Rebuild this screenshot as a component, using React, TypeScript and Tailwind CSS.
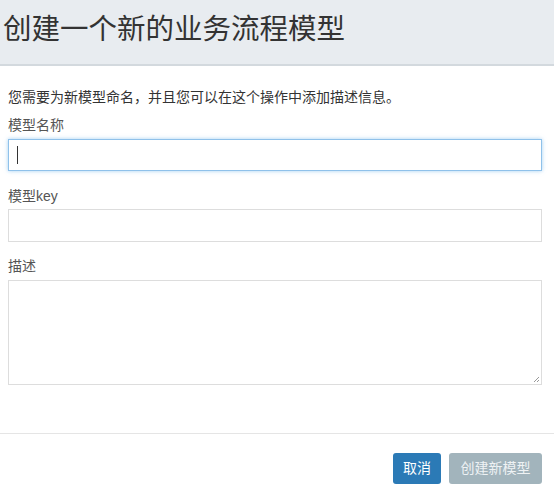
import React from "react";

const App = () => {
  return (
    <div
      className="flex h-[498px] w-[554px] flex-col bg-white text-[#333]"
      style={{ fontFamily: '"Liberation Sans", "Noto Sans CJK SC", sans-serif' }}
    >
      {/* 标题 */}
      <div className="flex h-[66px] items-center border-b-2 border-[#d3d9de] bg-[#e8ecf0] pb-[6px] pl-[3px]">
        <div className="text-[28.5px] leading-none text-[#333]">创建一个新的业务流程模型</div>
      </div>

      {/* 表单 */}
      <div className="flex flex-col pl-2 pr-3 pt-[22px]">
        <div className="text-[14px] leading-[18px]">您需要为新模型命名，并且您可以在这个操作中添加描述信息。</div>
        <div className="mt-[10px] text-[14px] leading-[18px] text-[#555]">模型名称</div>
        <div className="mt-[5px] flex h-[32px] items-center border border-[#8fc1ea] px-2 shadow-[0_0_4px_rgba(102,175,233,0.6)]">
          <div className="h-[18px] w-px bg-[#333]" />
        </div>
        <div className="mt-[16px] text-[14px] leading-[18px] text-[#555]">模型key</div>
        <div className="mt-[4px] h-[33px] border border-[#ddd]" />
        <div className="mt-[15px] text-[14px] leading-[18px] text-[#555]">描述</div>
        <div className="relative mt-[5px] h-[105px] border border-[#ddd]">
          <svg className="absolute right-[1px] bottom-[1px]" width="7" height="7" viewBox="0 0 7 7">
            <path d="M6 1 L1 6 M6 4 L4 6" stroke="#999" strokeWidth="1" />
          </svg>
        </div>
      </div>

      {/* 底部 */}
      <div className="mt-[48px] border-t border-[#e5e5e5]" />
      <div className="flex justify-end gap-2 pr-3 pt-[19px]">
        <button className="h-[31px] w-[48px] rounded-[3px] bg-[#2b7ab6] text-[14px] text-white">取消</button>
        <button className="h-[31px] w-[93px] rounded-[3px] bg-[#a2b4bc] text-[14px] text-[#eef2f4]">创建新模型</button>
      </div>
    </div>
  );
};

export default App;
